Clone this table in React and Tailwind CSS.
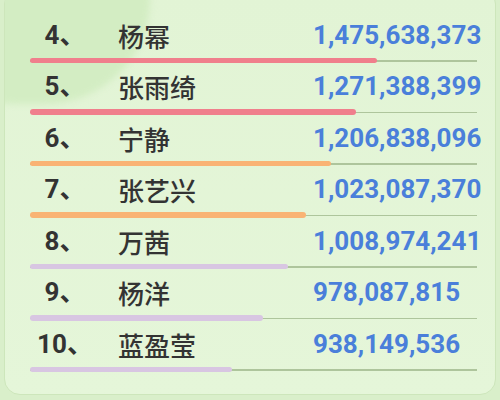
import React from 'react';

const rows = [
  { rank: 4, name: '杨幂', value: '1,475,638,373', bar: 347, color: 'bg-[#f07f8c]' },
  { rank: 5, name: '张雨绮', value: '1,271,388,399', bar: 326, color: 'bg-[#f07f8c]' },
  { rank: 6, name: '宁静', value: '1,206,838,096', bar: 301, color: 'bg-[#f9b374]' },
  { rank: 7, name: '张艺兴', value: '1,023,087,370', bar: 276, color: 'bg-[#f9b374]' },
  { rank: 8, name: '万茜', value: '1,008,974,241', bar: 258, color: 'bg-[#d8c6e2]' },
  { rank: 9, name: '杨洋', value: '978,087,815', bar: 233, color: 'bg-[#d8c6e2]' },
  { rank: 10, name: '蓝盈莹', value: '938,149,536', bar: 202, color: 'bg-[#d8c6e2]' },
];

function RankRow({ row }) {
  return (
    <div className="flex flex-col mb-[5.5px]">
      <div className="flex items-center h-[40px] pb-[4px]">
        <div
          className="w-[70px] text-center text-[26px] font-bold text-[#333333]"
          style={{ fontFamily: 'Roboto, "Noto Sans CJK SC", sans-serif' }}
        >
          {row.rank}、
        </div>
        <div
          className="ml-[18px] w-[195px] text-[26px] font-medium text-[#333333]"
          style={{ fontFamily: '"Noto Sans CJK SC", sans-serif' }}
        >
          {row.name}
        </div>
        <div
          className="text-[26px] font-bold text-[#4a7fda]"
          style={{ fontFamily: 'Roboto, sans-serif' }}
        >
          {row.value}
        </div>
      </div>
      <div className="relative h-[6px] w-[447px]">
        <div className="absolute left-0 right-0 top-[3px] h-[1.5px] bg-[#aec59c]" />
        <div
          className={`absolute left-0 top-[0.5px] h-[5.5px] rounded-full ${row.color}`}
          style={{ width: row.bar }}
        />
      </div>
    </div>
  );
}

export default function App() {
  return (
    <div className="relative w-[500px] h-[400px] overflow-hidden bg-[#d9efca]">
      <div className="relative mt-[-12px] mx-[4px] h-[407px] rounded-[16px] border border-[#cde6bb] bg-gradient-to-b from-[#e2f4d5] to-[#e5f6d9] overflow-hidden">
        <div className="absolute -left-[95px] -top-[95px] w-[240px] h-[210px] rounded-full bg-[#d3edc3] blur-[3px]" />
        <div className="relative pt-[28px] pl-[25px]">
          {rows.map((row) => (
            <RankRow key={row.rank} row={row} />
          ))}
        </div>
      </div>
    </div>
  );
}
